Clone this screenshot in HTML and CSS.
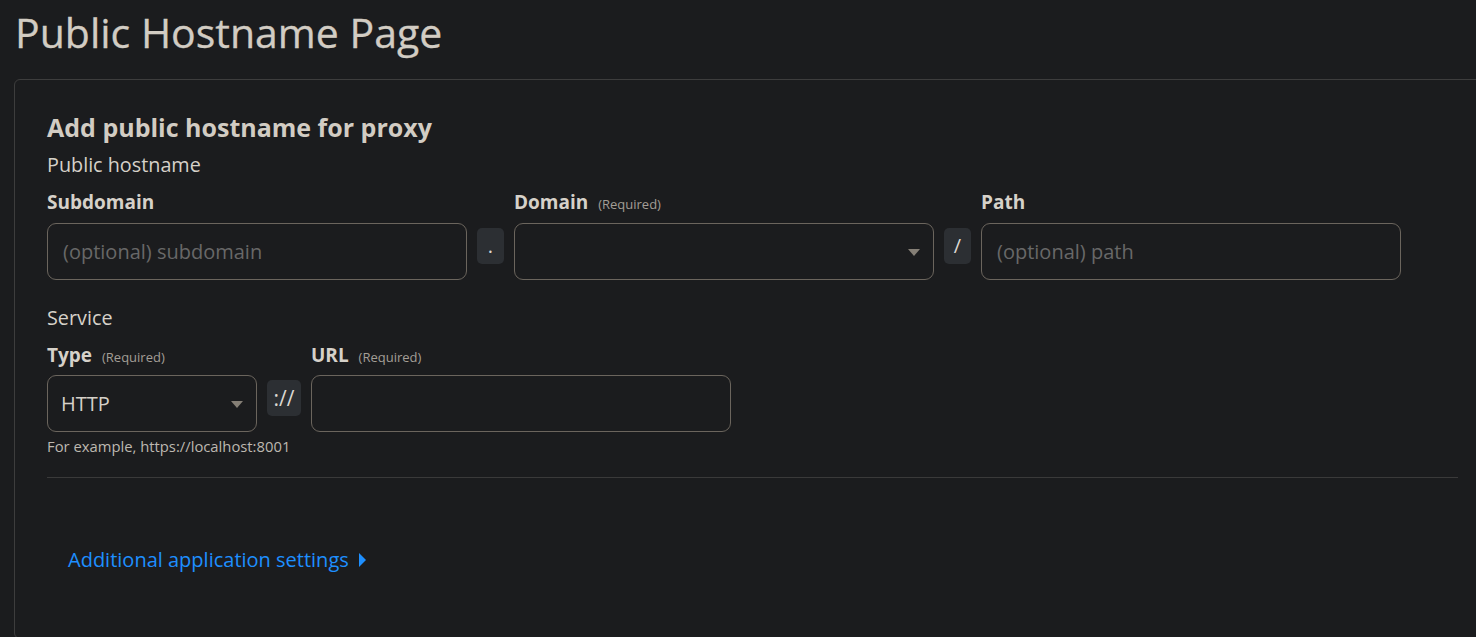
FILE: index.html
```html
<!DOCTYPE html>
<html lang="en">
<head>
<meta charset="utf-8">
<title>Public Hostname Page</title>
<link rel="stylesheet" href="styles.css">
</head>
<body>
<div class="page">
  <h1 class="page-title">Public Hostname Page</h1>
  <div class="card">
    <h4 class="card-title">Add public hostname for proxy</h4>
    <div class="section-label">Public hostname</div>
    <div class="host-grid">
      <label class="field-label">Subdomain</label>
      <span></span>
      <label class="field-label">Domain <span class="req">(Required)</span></label>
      <span></span>
      <label class="field-label">Path</label>

      <input class="text-input" type="text" placeholder="(optional) subdomain">
      <span class="addon">.</span>
      <div class="select-wrap">
        <select class="select-input"><option></option></select>
        <span class="caret"></span>
      </div>
      <span class="addon">/</span>
      <input class="text-input" type="text" placeholder="(optional) path">
    </div>

    <div class="section-label service-label">Service</div>
    <div class="service-grid">
      <label class="field-label">Type <span class="req">(Required)</span></label>
      <span></span>
      <label class="field-label">URL <span class="req">(Required)</span></label>

      <div class="select-wrap">
        <select class="select-input"><option>HTTP</option></select>
        <span class="caret"></span>
      </div>
      <span class="addon addon-wide">://</span>
      <input class="text-input" type="text">

      <div class="helper">For example, https://localhost:8001</div>
    </div>

    <hr class="divider">

    <button class="link-btn" type="button">Additional application settings <span class="tri"></span></button>
  </div>
</div>
</body>
</html>
```

FILE: styles.css
```css
html, body {
  margin: 0;
  padding: 0;
  background: #1b1c1e;
  overflow: hidden;
}

body {
  font-family: "Open Sans", "Noto Sans", sans-serif;
  color: #d6d1c9;
}

.page {
  padding: 6px 0 0 14px;
}

.page-title {
  margin: 0 0 21px 1px;
  font-size: 41px;
  line-height: 52px;
  font-weight: 400;
  color: #d2ccc3;
  -webkit-text-stroke: 0.3px #d2ccc3;
}

.card {
  width: 1444px;
  height: 466px;
  border: 1px solid #3d3d3d;
  border-radius: 6px;
  padding: 32px 32px 60px 32px;
}

.card-title {
  margin: 0 0 11px 0;
  font-size: 25px;
  line-height: 30px;
  font-weight: 700;
  color: #d2ccc3;
}

.section-label {
  font-size: 19.8px;
  line-height: 24px;
  margin-bottom: 13px;
}

.service-label {
  margin-top: 26px;
}

.field-label {
  font-size: 19px;
  line-height: 24px;
  font-weight: 700;
  color: #d6d1c9;
  white-space: nowrap;
}

.req {
  font-size: 13px;
  font-weight: 400;
  color: #a39e96;
  margin-left: 5px;
}

.host-grid {
  display: grid;
  grid-template-columns: 420px 27px 420px 27px 420px;
  column-gap: 10px;
  row-gap: 7px;
}

.service-grid {
  display: grid;
  grid-template-columns: 210px 34px 420px;
  column-gap: 10px;
  row-gap: 6px;
}

.text-input,
.select-input {
  box-sizing: border-box;
  width: 100%;
  height: 57px;
  margin: 0;
  background: #1b1c1e;
  border: 1px solid #6b655d;
  border-radius: 9px;
  padding: 0 15px;
  font-family: "Open Sans", "Noto Sans", sans-serif;
  font-size: 20px;
  color: #d6d1c9;
  outline: none;
}

.text-input::placeholder {
  color: #686868;
  opacity: 1;
}

.select-input {
  appearance: none;
  -webkit-appearance: none;
  padding-left: 13px;
}

.select-wrap {
  position: relative;
}

.caret {
  position: absolute;
  right: 14px;
  top: 26px;
  width: 0;
  height: 0;
  border-left: 6px solid transparent;
  border-right: 6px solid transparent;
  border-top: 7px solid #857f76;
}

.addon {
  align-self: start;
  margin-top: 5px;
  height: 36px;
  border-radius: 5px;
  background: #2c2f33;
  color: #dcd8d2;
  font-size: 20px;
  line-height: 36px;
  text-align: center;
}

.addon-wide {
  font-size: 21px;
}

.helper {
  grid-column: 1 / 4;
  margin-top: -1px;
  font-size: 14.8px;
  line-height: 18px;
  color: #bdb8b0;
}

.divider {
  margin: 22px 0 0 0;
  border: 0;
  border-top: 1px solid #3a3a3a;
  width: 1411px;
}

.link-btn {
  display: flex;
  align-items: center;
  gap: 10px;
  margin: 67px 0 0 21px;
  padding: 0;
  background: none;
  border: 0;
  font-family: "Open Sans", "Noto Sans", sans-serif;
  font-size: 20px;
  line-height: 30px;
  color: #1e8fff;
  cursor: pointer;
}

.tri {
  width: 0;
  height: 0;
  border-top: 7px solid transparent;
  border-bottom: 7px solid transparent;
  border-left: 7px solid #1e8fff;
}
```
